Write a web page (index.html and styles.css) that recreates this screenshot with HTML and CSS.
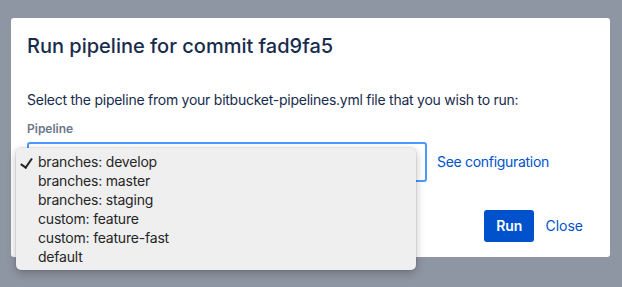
FILE: index.html
```html
<!DOCTYPE html>
<html lang="en">
<head>
    <meta charset="UTF-8">
    <meta name="viewport" content="width=device-width, initial-scale=1.0">
    <title>Run pipeline</title>
    <link rel="stylesheet" href="styles.css">
</head>
<body>
    <div class="modal">
        <h2 class="title">Run pipeline for commit fad9fa5</h2>
        <p class="intro">Select the pipeline from your bitbucket-pipelines.yml file that you wish to run:</p>
        <label class="label">Pipeline</label>
        <div class="field">
            <div class="select">
                <!-- native popup menu, drawn open -->
                <ul class="menu">
                    <li class="checked">branches: develop</li>
                    <li>branches: master</li>
                    <li>branches: staging</li>
                    <li>custom: feature</li>
                    <li>custom: feature-fast</li>
                    <li>default</li>
                </ul>
            </div>
            <a href="#" class="link">See configuration</a>
        </div>
        <div class="footer">
            <a href="#" class="button primary">Run</a>
            <a href="#" class="button subtle">Close</a>
        </div>
    </div>
</body>
</html>
```

FILE: styles.css
```css
* {
    margin: 0;
    padding: 0;
    box-sizing: border-box;
}

a {
    color: #0052cc;
    text-decoration: none;
}

body {
    font: 14px/20px "Inter", "Noto Sans", sans-serif;
    color: #172b4d;
    background: #8f96a3;
    padding: 18px 12px 0 11px;
    height: 287px;
    overflow: hidden;
}

.modal {
    width: 599px;
    height: 239px;
    background: #fff;
    border-radius: 3px;
    padding: 16px 16px 15px 16px;
    display: flex;
    flex-direction: column;
}

.title {
    font-size: 20px;
    line-height: 24px;
    font-weight: 500;
    margin-bottom: 32px;
}

.intro {
    margin-bottom: 11px;
    letter-spacing: -0.25px;
}

.label {
    display: block;
    font-size: 12px;
    line-height: 16px;
    font-weight: 600;
    color: #6b778c;
    margin-bottom: 5px;
}

.field {
    display: flex;
    align-items: center;
    gap: 10px;
}

.select {
    position: relative;
    width: 400px;
    height: 40px;
    border: 2px solid #4c9aff;
    border-radius: 3px;
    background: #fff;
}

.menu {
    position: absolute;
    z-index: 2;
    left: -13px;
    top: 4px;
    width: 400px;
    list-style: none;
    background: #efefef;
    border-radius: 5px;
    padding: 4px 0 4px;
    box-shadow: 0 3px 10px rgba(0, 0, 0, 0.25), 0 0 0 1px rgba(0, 0, 0, 0.06);
    color: #262626;
    letter-spacing: -0.2px;
}

.menu li {
    height: 19px;
    line-height: 19px;
    padding-left: 22px;
    position: relative;
}

/* checkmark drawn as a rotated corner */
.menu li.checked:before {
    content: "";
    position: absolute;
    left: 7px;
    top: 4px;
    width: 5px;
    height: 10px;
    border-right: 2px solid #262626;
    border-bottom: 2px solid #262626;
    transform: rotate(35deg);
}

.link {
    font-size: 14px;
    letter-spacing: -0.3px;
}

.footer {
    margin-top: auto;
    display: flex;
    justify-content: flex-end;
    align-items: center;
}

.button {
    display: inline-block;
    height: 32px;
    line-height: 32px;
    padding: 0 11px;
    border-radius: 3px;
    font-size: 14px;
}

.button.primary {
    background: #0052cc;
    color: #fff;
    font-weight: 600;
    padding: 0 12px;
}

.button.subtle {
    color: #0052cc;
}
```
